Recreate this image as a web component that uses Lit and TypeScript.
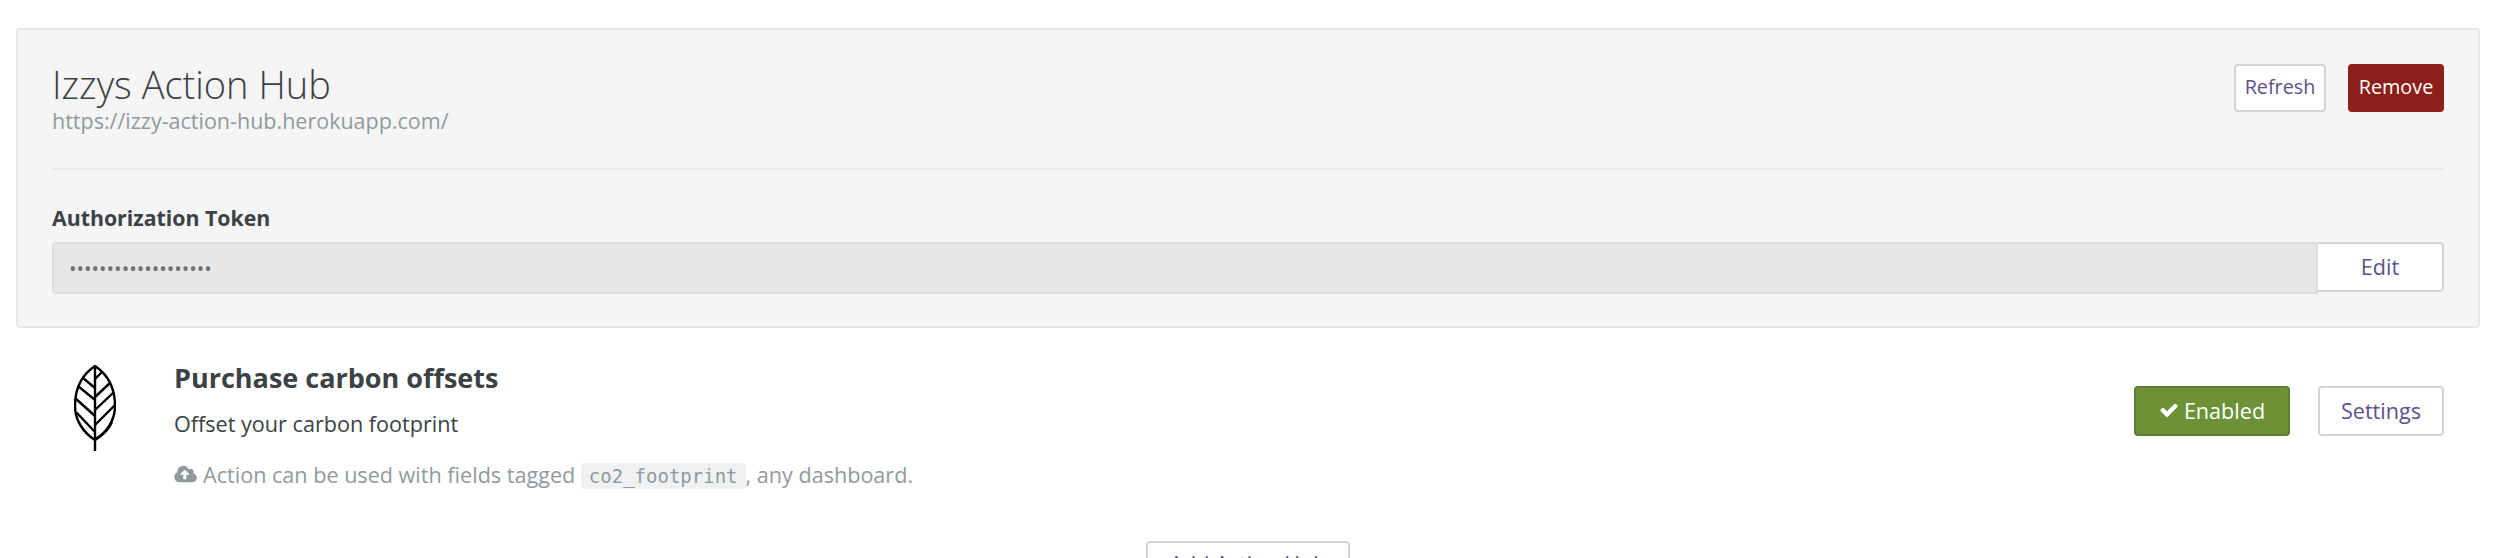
import { LitElement, html, css } from "lit";
import { customElement } from "lit/decorators.js";

const CLOUD =
  "M1280 800q0-14-9-23l-352-352q-9-9-23-9t-23 9l-351 351q-10 12-10 24 0 14 9 23t23 9h224v352q0 13 9.5 22.5t22.5 9.5h192q13 0 22.5-9.5t9.5-22.5v-352h224q13 0 22.5-9.5t9.5-22.5zm640 288q0 159-112.5 271.5t-271.5 112.5h-1088q-185 0-316.5-131.5t-131.5-316.5q0-130 70-240t188-165q-2-30-2-43 0-212 150-362t362-150q156 0 285.5 87t188.5 231q71-62 166-62 106 0 181 75t75 181q0 76-41 138 130 31 213.5 135.5t83.5 238.5z";
const CHECK =
  "M1671 566q0-40-28-68l-136-136q-28-28-68-28t-68 28l-656 657-294-295q-28-28-68-28t-68 28l-136 136q-28 28-28 68t28 68l362 362 136 136q28 28 68 28t68-28l136-136 724-724q28-28 28-68z";

@customElement("app-root")
export class AppRoot extends LitElement {
  static styles = css`
    :host {
      display: block;
      height: 558px;
      overflow: hidden;
      background: #fff;
      color: #3a4245;
      font-family: "Open Sans", sans-serif;
    }

    .page {
      padding: 28px 26px 0 16px;
    }

    .panel {
      background: #f5f5f5;
      border: 2px solid #e6e6e6;
      border-radius: 4px;
      padding: 34px 34px 32px;
      height: 300px;
      box-sizing: border-box;
    }

    .panel-head {
      display: flex;
      justify-content: space-between;
      align-items: flex-start;
      height: 104px;
      border-bottom: 2px solid #e9e9e9;
    }

    h2 {
      margin: 0;
      font-size: 38px;
      font-weight: 300;
      line-height: 40px;
    }

    .url {
      margin-top: 3px;
      font-size: 21.5px;
      line-height: 28px;
      color: #8f9a9e;
    }

    .head-actions {
      display: flex;
      gap: 22px;
    }

    .btn {
      box-sizing: border-box;
      display: inline-flex;
      align-items: center;
      justify-content: center;
      background: #fff;
      border: 2px solid #d4d4d4;
      border-radius: 4px;
      color: #5c5189;
      font-family: inherit;
      font-size: 21.6px;
      padding: 0;
    }

    .small {
      font-size: 19.8px;
      height: 48px;
      padding-bottom: 3px;
    }

    .refresh {
      width: 92px;
    }

    .remove {
      width: 96px;
      background: #8c1f1a;
      border-color: #8c1f1a;
      color: #fff;
    }

    label {
      display: block;
      margin-top: 34px;
      font-size: 21.3px;
      font-weight: 700;
      line-height: 28px;
    }

    .token {
      display: flex;
      align-items: flex-start;
      margin-top: 10px;
    }

    input {
      flex: 1;
      min-width: 0;
      box-sizing: border-box;
      height: 52px;
      background: #e7e7e7;
      border: 2px solid #dedede;
      border-radius: 4px 0 0 4px;
      padding: 0 15px;
      font-family: inherit;
      font-size: 20px;
      color: #707070;
      outline: none;
    }

    .edit {
      width: 126px;
      height: 50px;
      border-left: none;
      border-radius: 0 4px 4px 0;
      padding-bottom: 2px;
    }

    .action {
      display: flex;
      align-items: flex-start;
      padding: 30px 36px 0 36px;
    }

    .leaf {
      flex: none;
      width: 42px;
      height: 86px;
      margin: 7px 0 0 22px;
    }

    .action-body {
      flex: 1;
      margin-left: 58px;
    }

    h3 {
      margin: 0;
      font-size: 27px;
      font-weight: 700;
      line-height: 40px;
    }

    .desc {
      margin-top: 11px;
      font-size: 21.6px;
      line-height: 30px;
    }

    .note {
      display: flex;
      align-items: center;
      margin-top: 20px;
      font-size: 21.6px;
      line-height: 32px;
      color: #8f9a9e;
    }

    .cloud {
      width: 23px;
      height: 21px;
      margin-right: 6px;
      fill: #8f9a9e;
    }

    code {
      background: #eff1f2;
      border-radius: 4px;
      padding: 2px 8px;
      font-family: "DejaVu Sans Mono", monospace;
      font-size: 19px;
    }

    .action-buttons {
      display: flex;
      gap: 28px;
      margin-top: 28px;
    }

    .tall {
      height: 50px;
      padding-bottom: 2px;
    }

    .enabled {
      width: 156px;
      background: #6c9137;
      border-color: #5d7f2f;
      color: #fff;
    }

    .check {
      width: 20px;
      height: 20px;
      margin-right: 5px;
      fill: #fff;
    }

    .settings {
      width: 126px;
    }

    .add {
      display: flex;
      justify-content: center;
      margin-top: 49px;
    }

    .add-btn {
      width: 204px;
      height: 48px;
      padding-bottom: 4px;
    }
  `;

  render() {
    return html`
      <div class="page">
        <section class="panel">
          <div class="panel-head">
            <div>
              <h2>Izzys Action Hub</h2>
              <div class="url">https://izzy-action-hub.herokuapp.com/</div>
            </div>
            <div class="head-actions">
              <button class="btn small refresh">Refresh</button>
              <button class="btn small remove">Remove</button>
            </div>
          </div>
          <label>Authorization Token</label>
          <div class="token">
            <input type="password" disabled value="1234567890123456789" />
            <button class="btn edit">Edit</button>
          </div>
        </section>

        <section class="action">
          <svg class="leaf" viewBox="0 0 42 86" fill="none" stroke="#000" stroke-width="2.4">
            <path d="M21 1C9 9 1 22 1 41c0 15 9 27 20 34 11-7 20-19 20-34C41 22 33 9 21 1z" />
            <path d="M21 1v85" />
            <path d="M21 14l7-7M21 32l15-14M21 45l19-18M21 60l20-20M21 74c8-4 14-10 17-17" />
            <path d="M21 23L9 13M21 35L4 21M21 51L1 33M21 67L2 47" />
          </svg>
          <div class="action-body">
            <h3>Purchase carbon offsets</h3>
            <div class="desc">Offset your carbon footprint</div>
            <div class="note">
              <svg class="cloud" viewBox="0 0 1920 1792"><path d="${CLOUD}" /></svg>
              <span>Action can be used with fields tagged <code>co2_footprint</code>, any dashboard.</span>
            </div>
          </div>
          <div class="action-buttons">
            <button class="btn tall enabled">
              <svg class="check" viewBox="0 0 1792 1792"><path d="${CHECK}" /></svg>Enabled
            </button>
            <button class="btn tall settings">Settings</button>
          </div>
        </section>

        <div class="add"><button class="btn add-btn">Add Action Hub</button></div>
      </div>
    `;
  }
}
